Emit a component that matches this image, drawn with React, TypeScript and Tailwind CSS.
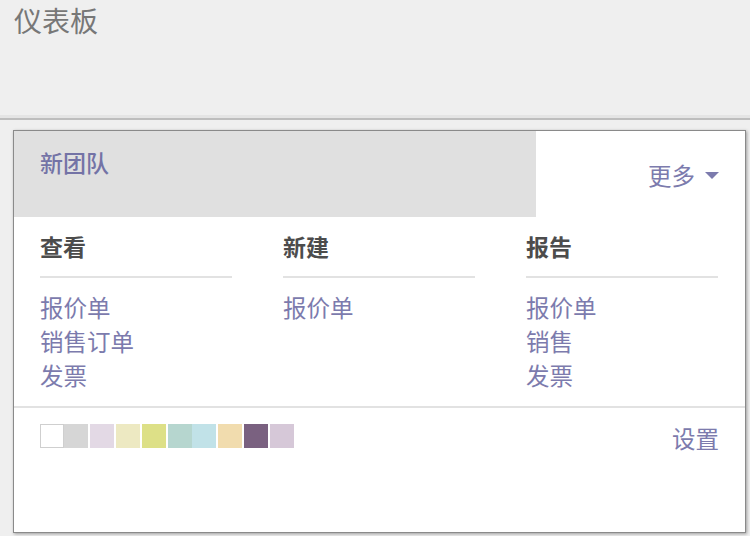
const FONT = { fontFamily: '"Noto Sans CJK SC", "Noto Sans", sans-serif' };

const swatches = [
  { color: 'bg-white border border-[#cfcfcf]', gap: '' },
  { color: 'bg-[#d6d6d6]', gap: '' },
  { color: 'bg-[#e3d9e5]', gap: 'ml-[2px]' },
  { color: 'bg-[#ede9c2]', gap: 'ml-[2px]' },
  { color: 'bg-[#dde087]', gap: 'ml-[2px]' },
  { color: 'bg-[#b6d6cf]', gap: 'ml-[2px]' },
  { color: 'bg-[#c1e2e8]', gap: '' },
  { color: 'bg-[#f1dcae]', gap: 'ml-[2px]' },
  { color: 'bg-[#7a6180]', gap: 'ml-[2px]' },
  { color: 'bg-[#d6c8d8]', gap: 'ml-[2px]' },
];

const columns = [
  { title: '查看', links: ['报价单', '销售订单', '发票'] },
  { title: '新建', links: ['报价单'] },
  { title: '报告', links: ['报价单', '销售', '发票'] },
];

export default function App() {
  return (
    <div className="h-[536px] w-[750px] overflow-hidden bg-[#efefef]" style={FONT}>
      {/* 页头 */}
      <div className="h-[120px] border-b-2 border-[#bdbdbd] shadow-[0_-3px_0_#e4e4e4_inset]">
        <h1 className="pl-[14px] pt-[3px] text-[28px] leading-[34px] text-[#777777]">仪表板</h1>
      </div>

      <div className="pl-[13px] pt-[10px]">
        <div className="h-[403px] w-[733px] border border-[#8a8a8a] bg-white shadow-[1px_1px_3px_rgba(0,0,0,0.35)]">
          <div className="flex h-[86px]">
            <div className="w-[522px] bg-[#e0e0e0] pl-[26px] pt-[17px]">
              <span className="text-[23px] font-medium leading-[28px] text-[#7473a6]">新团队</span>
            </div>
            <div className="flex flex-1 items-center justify-end pr-[26px] pt-[2px]">
              <span className="flex items-center gap-[10px] text-[23.5px] leading-[28px] text-[#7c7bad]">
                更多
                <span className="h-0 w-0 border-x-[7px] border-t-[7px] border-x-transparent border-t-[#7c7bad]" />
              </span>
            </div>
          </div>

          <div className="grid grid-cols-[192px_192px_192px] gap-x-[51px] px-[26px] pb-[14px]">
            {columns.map((col) => (
              <div key={col.title}>
                <div className="border-b-2 border-[#e2e2e2] pb-[16px] pt-[15px] text-[23px] font-bold leading-[28px] text-[#4c4c4c]">
                  {col.title}
                </div>
                <ul className="pt-[12px]">
                  {col.links.map((l) => (
                    <li key={l} className="text-[23.5px] leading-[34px] text-[#7c7bad]">
                      {l}
                    </li>
                  ))}
                </ul>
              </div>
            ))}
          </div>

          <div className="flex items-start justify-between border-t-2 border-[#e2e2e2] px-[26px] pt-[16px]">
            <div className="flex">
              {swatches.map((s, i) => (
                <div key={i} className={`h-[24px] w-[24px] ${s.color} ${s.gap}`} />
              ))}
            </div>
            <span className="text-[23.5px] leading-[28px] text-[#7c7bad]">设置</span>
          </div>
        </div>
      </div>
    </div>
  );
}
